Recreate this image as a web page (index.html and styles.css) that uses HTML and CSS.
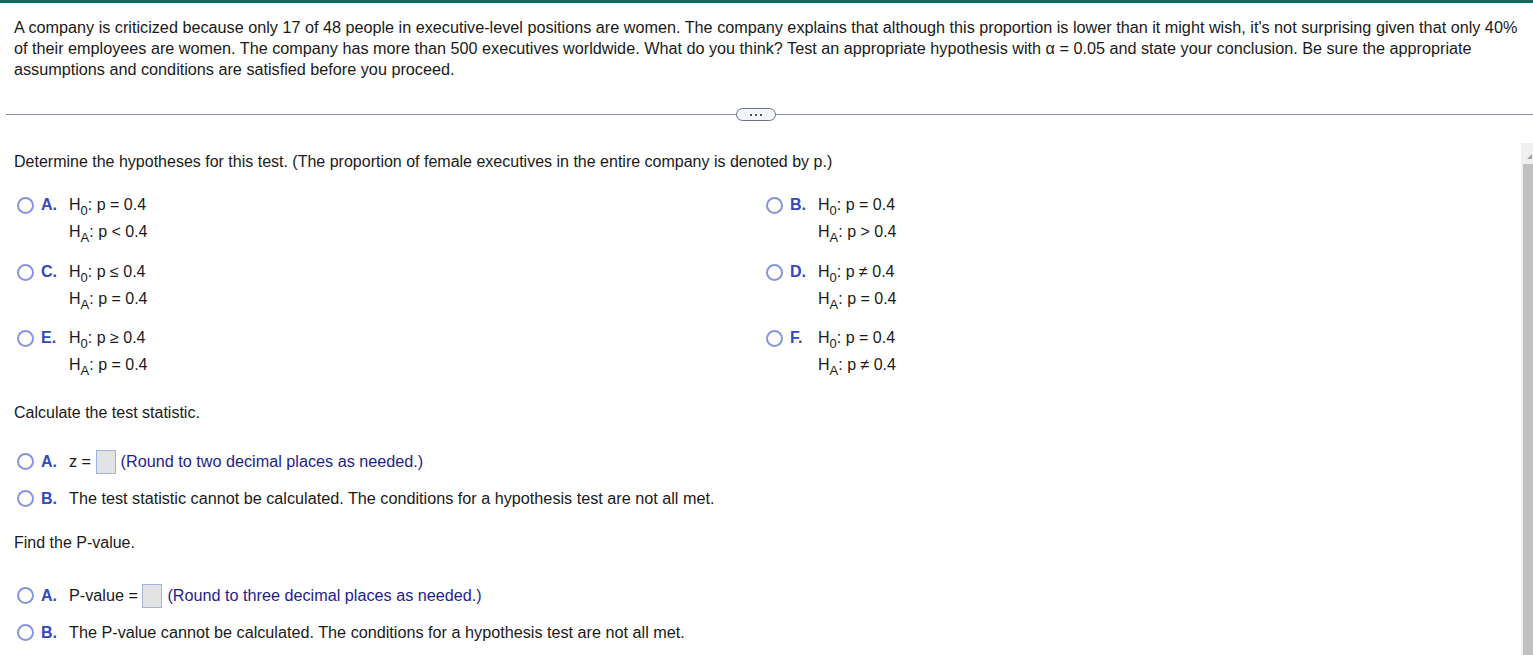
FILE: index.html
```html
<!DOCTYPE html>
<html>
<head>
<meta charset="utf-8">
<link rel="stylesheet" href="styles.css">
</head>
<body>
<div class="topbar"></div>
<div class="page">
  <p class="question">A company is criticized because only 17 of 48 people in executive-level positions are women. The company explains that although this proportion is lower than it might wish, it's not surprising given that only 40% of their employees are women. The company has more than 500 executives worldwide. What do you think? Test an appropriate hypothesis with α = 0.05 and state your conclusion. Be sure the appropriate assumptions and conditions are satisfied before you proceed.</p>
</div>
<div class="sep"><span class="pill"><span class="dot"></span><span class="dot"></span><span class="dot"></span></span></div>
<div class="page">
  <p class="prompt p1">Determine the hypotheses for this test. (The proportion of female executives in the entire company is denoted by p.)</p>
  <div class="opts">
    <div class="opt">
      <span class="radio"></span><span class="lbl">A.</span>
      <div class="hyp"><div class="hl">H<sub>0</sub>: p = 0.4</div><div class="hl">H<sub>A</sub>: p &lt; 0.4</div></div>
    </div>
    <div class="opt">
      <span class="radio"></span><span class="lbl">B.</span>
      <div class="hyp"><div class="hl">H<sub>0</sub>: p = 0.4</div><div class="hl">H<sub>A</sub>: p &gt; 0.4</div></div>
    </div>
    <div class="opt">
      <span class="radio"></span><span class="lbl">C.</span>
      <div class="hyp"><div class="hl">H<sub>0</sub>: p ≤ 0.4</div><div class="hl">H<sub>A</sub>: p = 0.4</div></div>
    </div>
    <div class="opt">
      <span class="radio"></span><span class="lbl">D.</span>
      <div class="hyp"><div class="hl">H<sub>0</sub>: p ≠ 0.4</div><div class="hl">H<sub>A</sub>: p = 0.4</div></div>
    </div>
    <div class="opt">
      <span class="radio"></span><span class="lbl">E.</span>
      <div class="hyp"><div class="hl">H<sub>0</sub>: p ≥ 0.4</div><div class="hl">H<sub>A</sub>: p = 0.4</div></div>
    </div>
    <div class="opt">
      <span class="radio"></span><span class="lbl">F.</span>
      <div class="hyp"><div class="hl">H<sub>0</sub>: p = 0.4</div><div class="hl">H<sub>A</sub>: p ≠ 0.4</div></div>
    </div>
  </div>

  <p class="prompt p2">Calculate the test statistic.</p>
  <div class="single s1">
    <span class="radio"></span><span class="lbl">A.</span>
    <span class="txt">z = </span><span class="box"></span><span class="round">(Round to two decimal places as needed.)</span>
  </div>
  <div class="single s2">
    <span class="radio"></span><span class="lbl">B.</span>
    <span class="txt">The test statistic cannot be calculated. The conditions for a hypothesis test are not all met.</span>
  </div>

  <p class="prompt p3">Find the P-value.</p>
  <div class="single s3">
    <span class="radio"></span><span class="lbl">A.</span>
    <span class="txt">P-value = </span><span class="box"></span><span class="round">(Round to three decimal places as needed.)</span>
  </div>
  <div class="single s2">
    <span class="radio"></span><span class="lbl">B.</span>
    <span class="txt">The P-value cannot be calculated. The conditions for a hypothesis test are not all met.</span>
  </div>
</div>
<div class="scrollbar"><div class="arrow"></div><div class="thumb"></div></div>
</body>
</html>
```

FILE: styles.css
```css
html, body {
  margin: 0;
  padding: 0;
  background: #ffffff;
  overflow: hidden;
}
body {
  font-family: "Liberation Sans", Arial, sans-serif;
  font-size: 16px;
  color: #1a1a1a;
  height: 655px;
}
.topbar {
  height: 3px;
  background: #0e6a58;
}
.page {
  padding-left: 14px;
  padding-right: 8px;
}
.question {
  margin: 14px 0 0 0;
  line-height: 21px;
  font-size: 16.22px;
}
.sep {
  margin: 28px 0 0 6px;
  height: 13px;
  display: flex;
  align-items: center;
  justify-content: center;
  background: linear-gradient(#8a90a4, #8a90a4) center / 100% 1px no-repeat;
  padding-right: 28px;
}
.pill {
  width: 38px;
  height: 11px;
  border: 1px solid #6b7388;
  border-radius: 7px;
  background: #f4f6fa;
  display: flex;
  align-items: center;
  justify-content: center;
  gap: 3px;
}
.dot {
  width: 2px;
  height: 2px;
  background: #4a5266;
}
.prompt {
  margin: 0;
  line-height: 21px;
}
.p1 { margin-top: 30px; }
.p2 { margin-top: 24px; }
.p3 { margin-top: 20px; }
.opts {
  display: grid;
  grid-template-columns: 749px 1fr;
  row-gap: 13.5px;
  margin-top: 20px;
}
.opt {
  display: flex;
  align-items: flex-start;
}
.radio {
  width: 13px;
  height: 13px;
  border: 2px solid #8597da;
  border-radius: 50%;
  margin: 5px 0 0 3px;
  flex: none;
}
.lbl {
  width: 28px;
  margin-left: 7px;
  font-weight: bold;
  color: #3448c0;
  line-height: 27px;
  flex: none;
}
.opt .lbl { line-height: 26px; }
.hyp .hl {
  line-height: 27px;
  white-space: nowrap;
}
.hyp .hl:first-child { line-height: 26px; }
sub {
  font-size: 13px;
  vertical-align: -5px;
  line-height: 0;
}
.single {
  display: flex;
  align-items: center;
  height: 27px;
  font-size: 16.2px;
}
.single .radio { margin-top: 0; }
.single .lbl { line-height: 27px; font-size: 16px; }
.s1 { margin-top: 25px; }
.s2 { margin-top: 10px; }
.s3 { margin-top: 29px; }
.txt {
  white-space: pre;
}
.box {
  width: 18px;
  height: 22px;
  border: 1px solid #9fb4d8;
  background: #e3e3e3;
  margin: 0 5px 0 0;
  flex: none;
}
.round {
  color: #1e1e8c;
}
.scrollbar {
  position: fixed;
  left: 1521px;
  top: 143px;
  width: 12px;
  bottom: 0;
  background: #f0f0f0;
}
.arrow {
  width: 0;
  height: 0;
  margin: 11px 0 0 6px;
  border-left: 5px solid transparent;
  border-right: 0 solid transparent;
  border-bottom: 5px solid #a3a3a3;
}
.thumb {
  position: absolute;
  left: 2px;
  right: 0;
  top: 21px;
  bottom: 0;
  background: #c1c1c1;
}
```
